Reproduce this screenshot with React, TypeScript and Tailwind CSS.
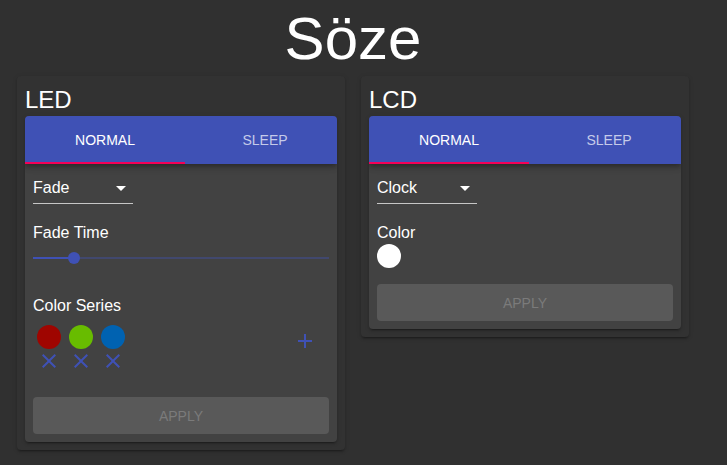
import React from "react";

const CloseIcon = () => (
  <svg width="24" height="24" viewBox="0 0 24 24" fill="#3f51b5">
    <path d="M19 6.41L17.59 5 12 10.59 6.41 5 5 6.41 10.59 12 5 17.59 6.41 19 12 13.41 17.59 19 19 17.59 13.41 12z" />
  </svg>
);

const AddIcon = () => (
  <svg width="24" height="24" viewBox="0 0 24 24" fill="#3f51b5">
    <path d="M19 13h-6v6h-2v-6H5v-2h6V5h2v6h6v2z" />
  </svg>
);

const Tabs = () => (
  <div className="relative flex h-12 bg-[#3f51b5] shadow-[0_2px_4px_-1px_rgba(0,0,0,0.2),0_4px_5px_0_rgba(0,0,0,0.14),0_1px_10px_0_rgba(0,0,0,0.12)]">
    <div className="flex w-[160px] shrink-0 items-center justify-center text-[14px] text-white">NORMAL</div>
    <div className="flex w-[160px] shrink-0 items-center justify-center text-[14px] text-[#c5cbe9]">SLEEP</div>
    <div className="absolute bottom-0 left-0 h-[2px] w-[160px] bg-[#f50057]" />
  </div>
);

const Select = ({ value }: { value: string }) => (
  <div className="relative w-[100px] border-b border-[#c6c6c6] pt-[6px] pb-[6px]">
    <div className="text-[16px] leading-[19px] text-white">{value}</div>
    <svg className="absolute right-0 top-[calc(50%-12px)]" width="24" height="24" viewBox="0 0 24 24" fill="#fff">
      <path d="M7 10l5 5 5-5z" />
    </svg>
  </div>
);

const ApplyButton = () => (
  <div className="flex h-[37px] items-center justify-center rounded-[4px] bg-[#595959] pt-[2px] text-[14px] text-[#7b7b7b]">
    APPLY
  </div>
);

const Label = ({ children }: { children: React.ReactNode }) => (
  <div className="h-6 pt-[2px] text-[16px] leading-[22px] text-white">{children}</div>
);

const Card = ({ title, children }: { title: string; children: React.ReactNode }) => (
  <div className="w-[328px] rounded-[4px] bg-[#323232] p-2 shadow-[0_3px_1px_-2px_rgba(0,0,0,0.2),0_2px_2px_0_rgba(0,0,0,0.14),0_1px_5px_0_rgba(0,0,0,0.12)]">
    <div className="text-[24px] leading-[32px] text-white">{title}</div>
    <div className="overflow-hidden rounded-[4px] bg-[#424242] shadow-[0_3px_1px_-2px_rgba(0,0,0,0.2),0_2px_2px_0_rgba(0,0,0,0.14),0_1px_5px_0_rgba(0,0,0,0.12)]">
      <Tabs />
      <div className="p-2">{children}</div>
    </div>
  </div>
);

const series = ["#9f0500", "#68bc00", "#0062b1"];

export default function App() {
  return (
    <div className="min-h-screen bg-[#303030] font-['Liberation_Sans',Arial,sans-serif]">
      <div className="ml-[17px] w-[672px]">
        <div className="h-[76px] pt-[3px] text-center text-[60px] leading-[72px] text-white">Söze</div>
        <div className="flex items-start gap-4">
          <Card title="LED">
            <Select value="Fade" />
            <div className="mt-4">
              <Label>Fade Time</Label>
            </div>
            <div className="relative h-[28px]">
              <div className="absolute left-0 right-0 top-[13px] h-[2px] bg-[#41486e]" />
              <div className="absolute left-0 top-[13px] h-[2px] w-[41px] bg-[#3f51b5]" />
              <div className="absolute left-[35px] top-[8px] h-3 w-3 rounded-full bg-[#3f51b5]" />
            </div>
            <div className="mt-[21px]">
              <Label>Color Series</Label>
            </div>
            <div className="mt-2 flex items-start justify-between">
              <div className="flex gap-2 pl-1">
                {series.map((c) => (
                  <div key={c} className="flex w-6 flex-col items-center">
                    <div className="h-6 w-6 rounded-full" style={{ backgroundColor: c }} />
                    <CloseIcon />
                  </div>
                ))}
              </div>
              <div className="mr-3 mt-1">
                <AddIcon />
              </div>
            </div>
            <div className="mt-6">
              <ApplyButton />
            </div>
          </Card>
          <Card title="LCD">
            <Select value="Clock" />
            <div className="mt-4">
              <Label>Color</Label>
            </div>
            <div className="h-6 w-6 rounded-full bg-white" />
            <div className="mt-4">
              <ApplyButton />
            </div>
          </Card>
        </div>
      </div>
    </div>
  );
}
